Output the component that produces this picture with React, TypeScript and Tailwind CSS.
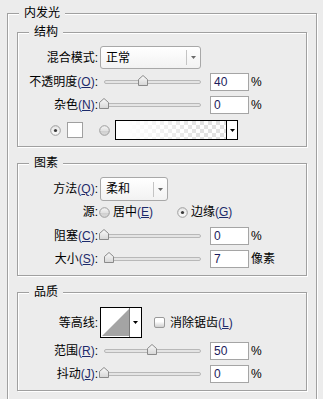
import React from "react";

function Mn({ k }: { k: string }) {
  return (
    <span className="text-[#1d2a6a]">
      (<span className="underline underline-offset-1">{k}</span>)
    </span>
  );
}

function Group({
  title,
  className,
  children,
}: {
  title: string;
  className: string;
  children: React.ReactNode;
}) {
  return (
    <div
      className={`relative border border-[#a0a0a0] shadow-[inset_1px_1px_0_#fff,1px_1px_0_#fff] ${className}`}
    >
      <span className="absolute left-[11px] -top-[9px] bg-[#ececec] px-[5px] leading-[16px]">
        {title}
      </span>
      {children}
    </div>
  );
}

function Label({ children }: { children: React.ReactNode }) {
  return <div className="w-[80px] shrink-0 text-right whitespace-nowrap">{children}</div>;
}

function Thumb({ left }: { left: number }) {
  return (
    <svg className="absolute top-[2px]" style={{ left }} width="10" height="11" viewBox="0 0 10 11">
      <defs>
        <linearGradient id="tg" x1="0" y1="0" x2="0" y2="1">
          <stop offset="0" stopColor="#fafafa" />
          <stop offset="1" stopColor="#d6d6d6" />
        </linearGradient>
      </defs>
      <polygon
        points="0.5,4.5 5,0.5 9.5,4.5 9.5,10.5 0.5,10.5"
        fill="url(#tg)"
        stroke="#8a8a8a"
        strokeWidth="1"
      />
    </svg>
  );
}

function Slider({ left }: { left: number }) {
  return (
    <div className="relative ml-[2px] h-[18px] w-[106px] shrink-0">
      <div className="absolute left-[4px] right-[5px] top-[7px] h-[4px] rounded-full border border-[#b8b8b8] bg-[#e4e4e4]" />
      <Thumb left={left} />
    </div>
  );
}

function Input({ value }: { value: string }) {
  return (
    <div className="ml-[4px] h-[18px] w-[39px] shrink-0 border border-[#a5a5a5] bg-white px-[3px] leading-[16px] text-[#1c1c5c]">
      {value}
    </div>
  );
}

function SliderRow({
  label,
  left,
  value,
  unit,
  className,
}: {
  label: React.ReactNode;
  left: number;
  value: string;
  unit: string;
  className: string;
}) {
  return (
    <div className={`flex h-[18px] items-center ${className}`}>
      <Label>{label}</Label>
      <Slider left={left} />
      <Input value={value} />
      <span className="ml-[2px]">{unit}</span>
    </div>
  );
}

function Arrow({ color = "#6a6a6a" }: { color?: string }) {
  return (
    <svg width="5" height="3" viewBox="0 0 5 3">
      <polygon points="0,0 5,0 2.5,3" fill={color} />
    </svg>
  );
}

function Select({ text, width }: { text: string; width: string }) {
  return (
    <div
      className={`ml-[2px] flex h-full ${width} shrink-0 items-center rounded-[3px] border border-[#a8a8a8] bg-gradient-to-b from-white to-[#f2f2f2]`}
    >
      <span className="flex-1 pl-[5px]">{text}</span>
      <div className="h-[15px] w-px bg-[#c4c4c4]" />
      <div className="flex w-[13px] justify-center">
        <Arrow />
      </div>
    </div>
  );
}

function Radio({ checked }: { checked: boolean }) {
  return (
    <svg width="11" height="11" viewBox="0 0 11 11" className="shrink-0">
      <defs>
        <linearGradient id="ru" x1="0" y1="0" x2="0" y2="1">
          <stop offset="0" stopColor="#f6f6f6" />
          <stop offset="0.5" stopColor="#e2e2e2" />
          <stop offset="0.55" stopColor="#cfcfcf" />
          <stop offset="1" stopColor="#dcdcdc" />
        </linearGradient>
        <linearGradient id="rc" x1="0" y1="0" x2="0" y2="1">
          <stop offset="0" stopColor="#e6e6e6" />
          <stop offset="1" stopColor="#fbfbfb" />
        </linearGradient>
      </defs>
      <circle cx="5.5" cy="5.5" r="4.8" fill={checked ? "url(#rc)" : "url(#ru)"} stroke="#9c9c9c" strokeWidth="1" />
      {checked && <circle cx="5.5" cy="5.5" r="1.6" fill="#3a3a3a" />}
    </svg>
  );
}

export default function App() {
  return (
    <div className="h-[399px] w-[323px] overflow-hidden bg-[#ececec] pl-[7px] pt-[13px] font-['Liberation_Sans','Noto_Sans_CJK_SC',sans-serif] text-[12px] leading-[16px] text-black">
      <Group title="内发光" className="h-[420px] w-[310px] px-[9px] pt-[18px]">
        {/* 结构 */}
        <Group title="结构" className="h-[115px] w-[290px] pt-[13px]">
          <div className="flex h-[23px] items-center">
            <Label>混合模式:</Label>
            <Select text="正常" width="w-[101px]" />
          </div>
          <SliderRow label={<>不透明度<Mn k="O" />:</>} left={38} value="40" unit="%" className="mt-[4px]" />
          <SliderRow label={<>杂色<Mn k="N" />:</>} left={-1} value="0" unit="%" className="mt-[5px]" />
          <div className="mt-[6px] flex h-[20px] items-center pl-[32px]">
            <Radio checked />
            <div className="ml-[6px] h-[16px] w-[16px] border border-[#a0a0a0] bg-white" />
            <div className="ml-[16px]">
              <Radio checked={false} />
            </div>
            <div className="ml-[5px] flex h-[20px] w-[123px] border border-black">
              <div className="relative flex-1 bg-[repeating-conic-gradient(#e2e2e2_0_25%,#ffffff_0_50%)] bg-[length:8px_8px]">
                <div className="absolute inset-0 bg-gradient-to-r from-white from-10% to-transparent to-75%" />
              </div>
              <div className="flex w-[11px] items-center justify-center border-l border-black bg-white">
                <Arrow color="#000" />
              </div>
            </div>
          </div>
        </Group>

        {/* 图素 */}
        <Group title="图素" className="mt-[16px] h-[113px] w-[290px] pt-[13px]">
          <div className="flex h-[24px] items-center">
            <Label>
              方法<Mn k="Q" />:
            </Label>
            <Select text="柔和" width="w-[68px]" />
          </div>
          <div className="mt-[2px] flex h-[18px] items-center">
            <Label>源:</Label>
            <div className="ml-[1px] flex w-[78px] items-center">
              <Radio checked={false} />
              <span className="ml-[3px]">
                居中<Mn k="E" />
              </span>
            </div>
            <Radio checked />
            <span className="ml-[3px]">
              边缘<Mn k="G" />
            </span>
          </div>
          <SliderRow label={<>阻塞<Mn k="C" />:</>} left={-1} value="0" unit="%" className="mt-[6px]" />
          <SliderRow label={<>大小<Mn k="S" />:</>} left={4} value="7" unit="像素" className="mt-[5px]" />
        </Group>

        {/* 品质 */}
        <Group title="品质" className="mt-[16px] h-[99px] w-[290px] pt-[14px]">
          <div className="flex h-[31px] items-center">
            <Label>等高线:</Label>
            <div className="ml-[2px] flex h-[31px] w-[42px] border border-black bg-white">
              <svg width="29" height="29" viewBox="0 0 29 29" className="shrink-0">
                <polygon points="1,28 28,1 28,28" fill="#a4a4a4" />
                <line x1="28.5" y1="0" x2="28.5" y2="29" stroke="#7a7a7a" strokeWidth="1" />
              </svg>
              <div className="flex flex-1 items-center justify-center">
                <Arrow color="#000" />
              </div>
            </div>
            <div className="ml-[12px] h-[11px] w-[11px] rounded-[2px] border border-[#9a9a9a] bg-gradient-to-b from-white from-40% to-[#d0d0d0]" />
            <span className="ml-[5px]">
              消除锯齿<Mn k="L" />
            </span>
          </div>
          <SliderRow label={<>范围<Mn k="R" />:</>} left={47} value="50" unit="%" className="mt-[4px]" />
          <SliderRow label={<>抖动<Mn k="J" />:</>} left={-1} value="0" unit="%" className="mt-[5px]" />
        </Group>
      </Group>
    </div>
  );
}
